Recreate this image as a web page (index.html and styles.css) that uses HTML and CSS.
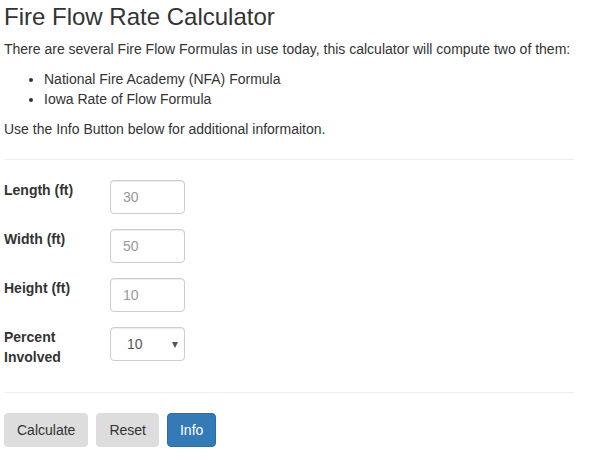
FILE: index.html
```html
<!DOCTYPE html>
<html>
<head>
<meta charset="utf-8">
<title>Fire Flow Rate Calculator</title>
<link rel="stylesheet" href="styles.css">
</head>
<body>
<div class="page">
  <h3 class="title">Fire Flow Rate Calculator</h3>
  <p>There are several Fire Flow Formulas in use today, this calculator will compute two of them:</p>
  <ul class="list">
    <li>National Fire Academy (NFA) Formula</li>
    <li>Iowa Rate of Flow Formula</li>
  </ul>
  <p>Use the Info Button below for additional informaiton.</p>
  <hr class="rule">
  <form class="calc">
    <div class="row">
      <label class="label" for="len">Length (ft)</label>
      <input class="field" id="len" type="text" placeholder="30">
    </div>
    <div class="row">
      <label class="label" for="wid">Width (ft)</label>
      <input class="field" id="wid" type="text" placeholder="50">
    </div>
    <div class="row">
      <label class="label" for="hgt">Height (ft)</label>
      <input class="field" id="hgt" type="text" placeholder="10">
    </div>
    <div class="row">
      <label class="label" for="pct">Percent Involved</label>
      <div class="select-wrap">
        <select class="field select" id="pct">
          <option>10</option>
          <option>25</option>
          <option>50</option>
          <option>75</option>
          <option>100</option>
        </select>
        <span class="caret"></span>
      </div>
    </div>
  </form>
  <hr class="rule rule-bottom">
  <div class="actions">
    <button class="btn" type="button">Calculate</button>
    <button class="btn" type="button">Reset</button>
    <button class="btn btn-primary" type="button">Info</button>
  </div>
</div>
</body>
</html>
```
FILE: styles.css
```css
html, body {
  margin: 0;
  padding: 0;
  background: #fff;
}
body {
  font-family: "Liberation Sans", Arial, Helvetica, sans-serif;
  font-size: 14px;
  line-height: 20px;
  color: #333;
}
.page {
  width: 571px;
  padding: 0 0 0 4px;
}
.title {
  font-size: 24px;
  font-weight: normal;
  line-height: 26px;
  margin: 4px 0 9px;
}
p {
  margin: 0 0 10px;
}
.list {
  margin: 0 0 10px;
  padding-left: 40px;
}
.rule {
  border: 0;
  border-top: 1px solid #eee;
  margin: 20px 0 20px;
}
.calc {
  display: flex;
  flex-direction: column;
  gap: 15px;
}
.row {
  display: grid;
  grid-template-columns: 90px 75px;
  column-gap: 16px;
  align-items: start;
}
.label {
  font-weight: bold;
  line-height: 20px;
}
.field {
  box-sizing: border-box;
  width: 75px;
  height: 34px;
  padding: 6px 12px;
  font-family: inherit;
  font-size: 14px;
  color: #555;
  background: #fff;
  border: 1px solid #ccc;
  border-radius: 4px;
  box-shadow: inset 0 1px 1px rgba(0,0,0,.075);
  margin: 0;
}
.field::placeholder {
  color: #999;
}
.select-wrap {
  position: relative;
  width: 75px;
  height: 34px;
}
.select {
  -webkit-appearance: none;
  appearance: none;
  padding-left: 16px;
}
.caret {
  position: absolute;
  right: 7px;
  top: 15px;
  width: 0;
  height: 0;
  border-left: 3.5px solid transparent;
  border-right: 3.5px solid transparent;
  border-top: 6px solid #555;
  pointer-events: none;
}
.rule-bottom {
  margin-top: 25px;
}
.actions {
  display: flex;
  gap: 8px;
}
.btn {
  font-family: inherit;
  font-size: 14px;
  line-height: 20px;
  padding: 6px 12px;
  height: 34px;
  box-sizing: border-box;
  color: #333;
  background: #ddd;
  border: 1px solid #ddd;
  border-radius: 4px;
  margin: 0;
}
.btn-primary {
  color: #fff;
  background: #337ab7;
  border-color: #2e6da4;
}
```
